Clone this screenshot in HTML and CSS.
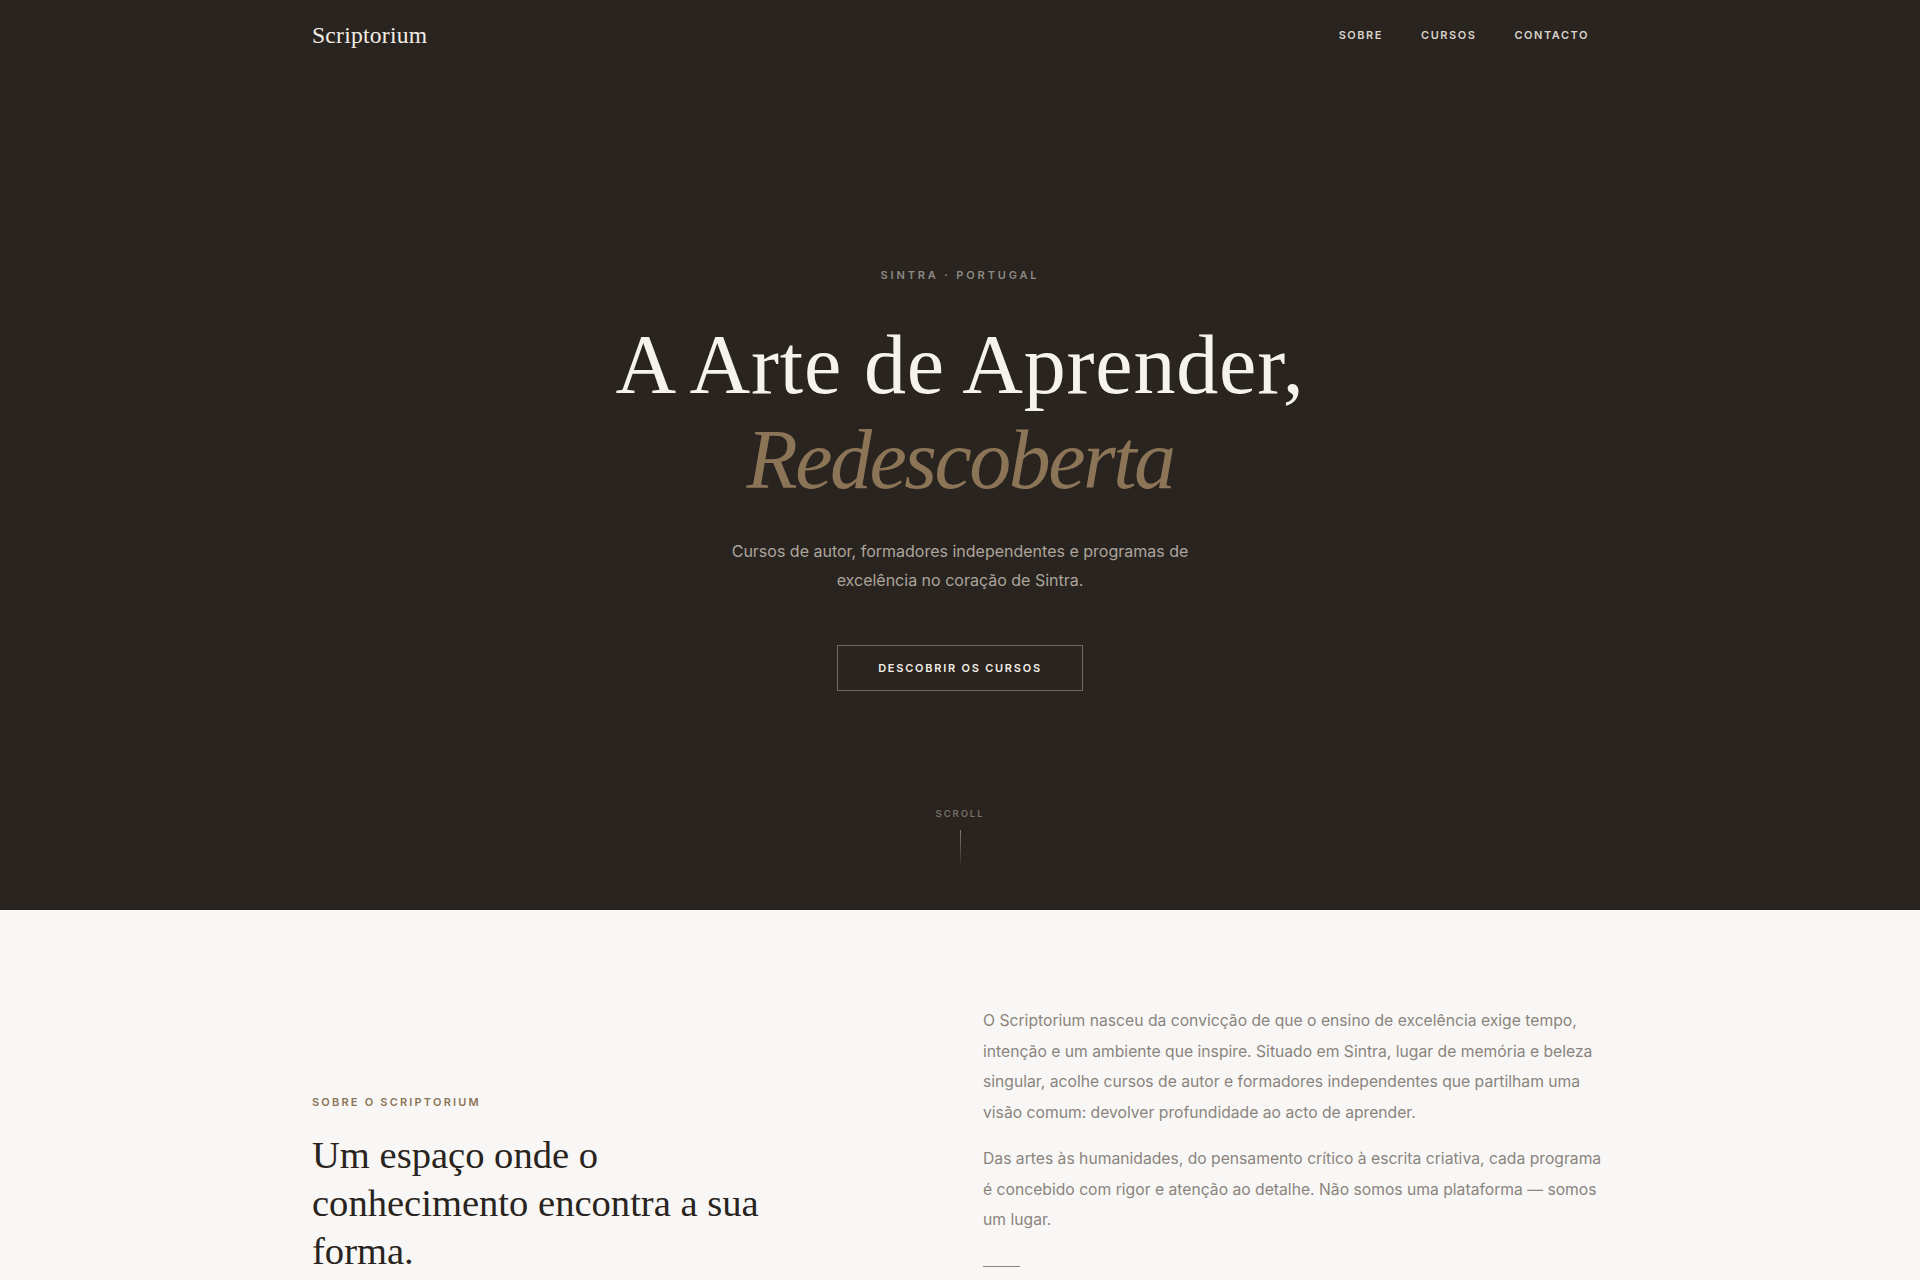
FILE: index.html
```html
<!DOCTYPE html>
<html lang="pt">
<head>
<meta charset="utf-8">
<title>Scriptorium</title>
<link rel="stylesheet" href="styles.css">
</head>
<body>
<section class="hero">
  <header class="site-header">
    <a class="logo" href="#">Scriptorium</a>
    <nav class="nav">
      <a href="#">SOBRE</a>
      <a href="#">CURSOS</a>
      <a href="#">CONTACTO</a>
    </nav>
  </header>
  <div class="hero-main">
    <p class="eyebrow">SINTRA · PORTUGAL</p>
    <h1 class="hero-title">A Arte de Aprender,<br><em>Redescoberta</em></h1>
    <p class="hero-lead">Cursos de autor, formadores independentes e programas de excelência no coração de Sintra.</p>
    <a class="btn" href="#">DESCOBRIR OS CURSOS</a>
  </div>
  <div class="scroll">
    <span class="scroll-label">SCROLL</span>
    <span class="scroll-line"></span>
  </div>
</section>
<section class="about">
  <div class="about-inner">
    <div class="about-left">
      <p class="label">SOBRE O SCRIPTORIUM</p>
      <h2 class="about-title">Um espaço onde o conhecimento encontra a sua forma.</h2>
    </div>
    <div class="about-right">
      <p>O Scriptorium nasceu da convicção de que o ensino de excelência exige tempo, intenção e um ambiente que inspire. Situado em Sintra, lugar de memória e beleza singular, acolhe cursos de autor e formadores independentes que partilham uma visão comum: devolver profundidade ao acto de aprender.</p>
      <p>Das artes às humanidades, do pensamento crítico à escrita criativa, cada programa é concebido com rigor e atenção ao detalhe. Não somos uma plataforma — somos um lugar.</p>
      <span class="rule"></span>
    </div>
  </div>
</section>
</body>
</html>
```

FILE: styles.css
```css
* { box-sizing: border-box; }
html, body { margin: 0; padding: 0; }
body {
  font-family: Inter, "Noto Sans", sans-serif;
  background: #f8f7f5;
  color: #2a2420;
}
a { text-decoration: none; color: inherit; }

.hero {
  background: #2a2420;
  height: 910px;
  display: flex;
  flex-direction: column;
}
.site-header {
  width: 1296px;
  margin: 0 auto;
  height: 68px;
  display: flex;
  align-items: center;
  justify-content: space-between;
}
.logo {
  font-family: "Liberation Serif", "DejaVu Serif", serif;
  font-size: 23.6px;
  color: #f2ede5;
  letter-spacing: 0.01em;
  padding-top: 2px;
}
.nav {
  display: flex;
  gap: 38px;
  padding-right: 19px;
  padding-top: 2px;
}
.nav a {
  font-size: 11px;
  font-weight: 600;
  letter-spacing: 0.14em;
  color: #d9d3ca;
}

.hero-main {
  display: flex;
  flex-direction: column;
  align-items: center;
  text-align: center;
  padding-top: 199px;
}
.eyebrow {
  margin: 0;
  font-size: 11px;
  line-height: 16px;
  font-weight: 600;
  letter-spacing: 0.26em;
  color: #8d8983;
}
.hero-title {
  margin: 34px 0 0;
  font-family: "Liberation Serif", "DejaVu Serif", serif;
  font-weight: 400;
  font-size: 84px;
  line-height: 95px;
  color: #f6f2ec;
  letter-spacing: 0.01em;
}
.hero-title em {
  font-style: italic;
  color: #8c7457;
  letter-spacing: -0.03em;
}
.hero-lead {
  margin: 30px 0 0;
  max-width: 470px;
  font-size: 16px;
  line-height: 29px;
  color: #aca59c;
}
.btn {
  margin-top: 50px;
  width: 246px;
  height: 46px;
  display: flex;
  align-items: center;
  justify-content: center;
  border: 1px solid rgba(255, 255, 255, 0.32);
  font-size: 11px;
  font-weight: 600;
  letter-spacing: 0.16em;
  color: #f2ede5;
}

.scroll {
  margin-top: auto;
  padding-bottom: 41px;
  display: flex;
  flex-direction: column;
  align-items: center;
}
.scroll-label {
  font-size: 9.5px;
  line-height: 14px;
  font-weight: 600;
  letter-spacing: 0.2em;
  color: #75706a;
}
.scroll-line {
  margin-top: 9px;
  width: 1px;
  height: 39px;
  background: linear-gradient(to bottom, rgba(255,255,255,0.4), rgba(255,255,255,0));
}

.about {
  background: #f8f7f5;
  padding: 96px 0 80px;
}
.about-inner {
  width: 1296px;
  margin: 0 auto;
  display: grid;
  grid-template-columns: 575px 1fr;
  column-gap: 96px;
  align-items: start;
}
.about-left {
  padding-top: 89px;
}
.label {
  margin: 0;
  font-size: 11px;
  line-height: 14px;
  font-weight: 600;
  letter-spacing: 0.2em;
  color: #8c7457;
}
.about-title {
  margin: 22px 0 0;
  max-width: 480px;
  font-family: "Liberation Serif", "DejaVu Serif", serif;
  font-weight: 400;
  font-size: 38.6px;
  line-height: 48px;
  color: #2a2420;
}
.about-right {
  max-width: 620px;
}
.about-right p {
  margin: 0 0 16px;
  font-size: 15.7px;
  line-height: 30.5px;
  color: #8a847d;
}
.rule {
  display: block;
  margin-top: 30px;
  width: 37px;
  height: 1px;
  background: #8a847d;
}
```
